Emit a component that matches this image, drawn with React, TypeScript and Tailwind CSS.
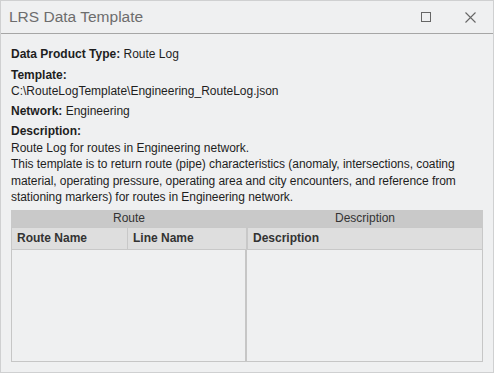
export default function App() {
  const font = { fontFamily: '"Liberation Sans", Arial, sans-serif' };
  return (
    <div
      className="w-[494px] h-[373px] bg-[#eff0f1] border border-[#cfd0d1] flex flex-col text-[12px] text-[#1e1e1e]"
      style={font}
    >
      {/* Title bar */}
      <div className="h-[33px] shrink-0 flex items-center border-b border-[#a6a6a6] pl-[8px]">
        <div className="text-[15.5px] text-[#6d6d6d] flex-1">LRS Data Template</div>
        <svg width="10" height="10" viewBox="0 0 10 10" className="mr-[34px]">
          <rect x="0.5" y="0.5" width="9" height="9" fill="none" stroke="#666" strokeWidth="1" />
        </svg>
        <svg width="11" height="11" viewBox="0 0 11 11" className="mr-[17px]">
          <path d="M0.5 0.5 L10.5 10.5 M10.5 0.5 L0.5 10.5" stroke="#666" strokeWidth="1.1" />
        </svg>
      </div>

      {/* Body */}
      <div className="flex-1 flex flex-col px-[10px] pt-[12px] pb-[10px] leading-[16.5px]">
        <div>
          <span className="font-bold">Data Product Type:</span> Route Log
        </div>
        <div className="mt-[4px] font-bold">Template:</div>
        <div>C:\RouteLogTemplate\Engineering_RouteLog.json</div>
        <div className="mt-[3.5px]">
          <span className="font-bold">Network:</span> Engineering
        </div>
        <div className="mt-[3.5px] font-bold">Description:</div>
        <div>Route Log for routes in Engineering network.</div>
        <div className="tracking-[-0.05px]">
          This template is to return route (pipe) characteristics (anomaly, intersections, coating
          material, operating pressure, operating area and city encounters, and reference from
          stationing markers) for routes in Engineering network.
        </div>

        {/* Table */}
        <div className="mt-[4px] flex-1 flex">
          <div className="w-[236px] flex flex-col">
            <div className="h-[17px] bg-[#c9c9c9] flex items-center justify-center text-[#333]">
              Route
            </div>
            <div className="h-[23px] flex bg-[#dedede] border border-[#c8c8c8] font-bold text-[#333]">
              <div className="w-[116px] border-r border-[#c8c8c8] flex items-center pl-[5px]">Route Name</div>
              <div className="flex-1 flex items-center pl-[5px]">Line Name</div>
            </div>
            <div className="flex-1 border-l border-b border-r-2 border-[#c6c6c6]" />
          </div>
          <div className="flex-1 flex flex-col">
            <div className="h-[17px] bg-[#c9c9c9] flex items-center justify-center text-[#333]">
              Description
            </div>
            <div className="h-[23px] flex items-center bg-[#dedede] border border-[#c8c8c8] font-bold text-[#333] pl-[5px]">
              Description
            </div>
            <div className="flex-1 border-r border-b border-[#c6c6c6]" />
          </div>
        </div>
      </div>
    </div>
  );
}
